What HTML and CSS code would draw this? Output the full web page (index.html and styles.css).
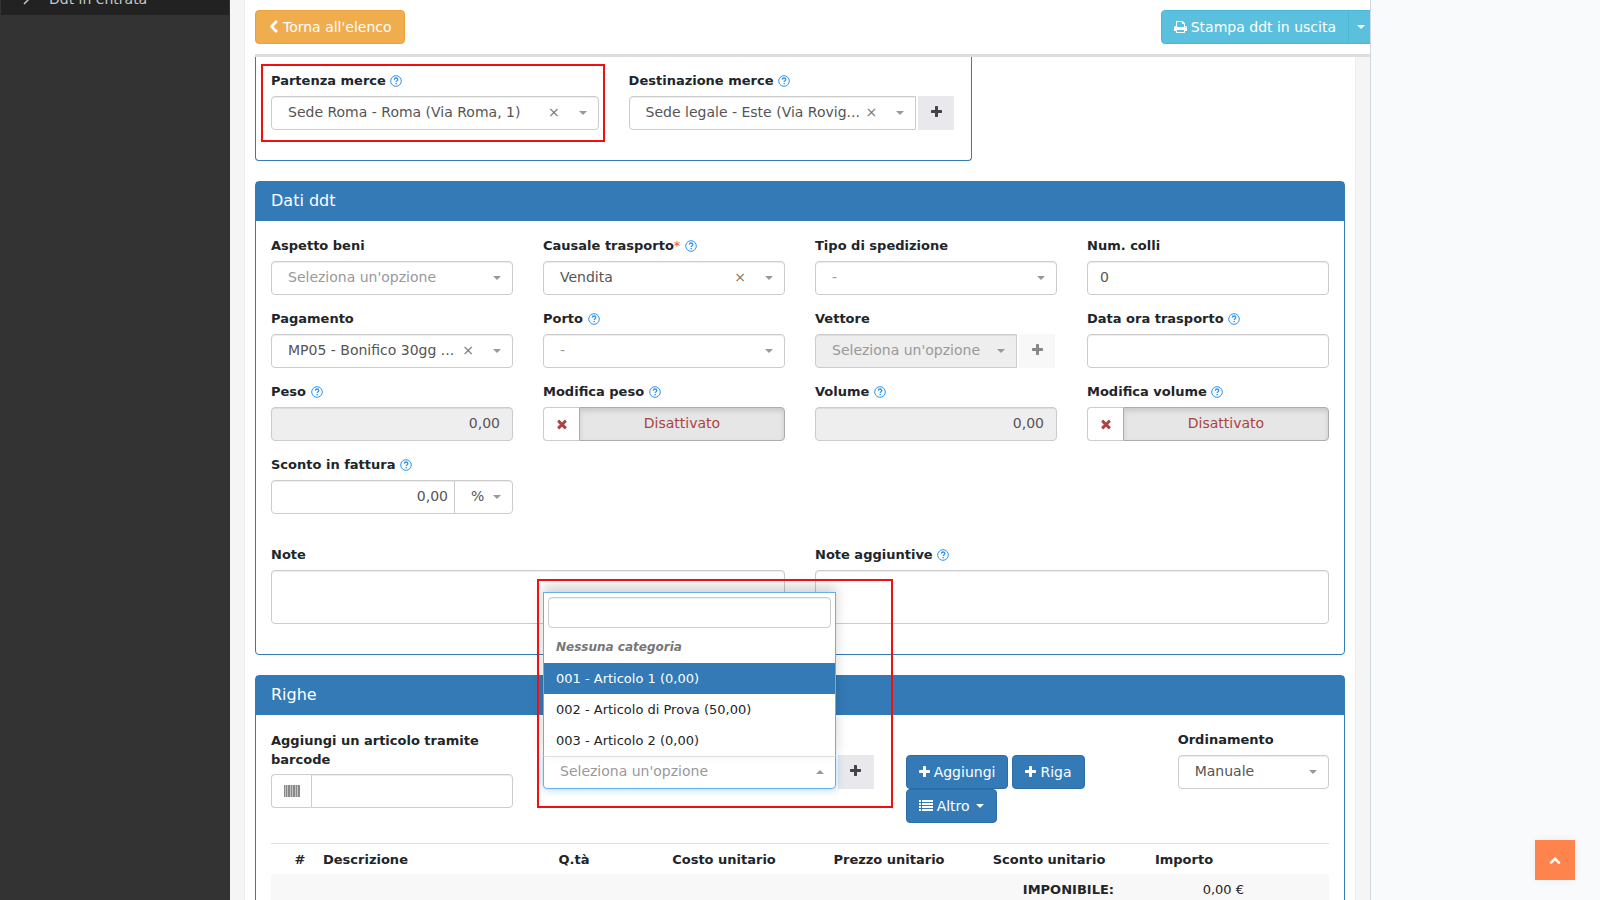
FILE: index.html
```html
<!DOCTYPE html>
<html lang="it">
<head>
<meta charset="utf-8">
<title>Ddt in uscita</title>
<link rel="stylesheet" href="styles.css">
</head>
<body>
<svg class="sprite" aria-hidden="true">
  <symbol id="plus" viewBox="192 0 1408 1792"><path d="M1600 736v192q0 40-28 68t-68 28h-416v416q0 40-28 68t-68 28h-192q-40 0-68-28t-28-68v-416h-416q-40 0-68-28t-28-68v-192q0-40 28-68t68-28h416v-416q0-40 28-68t68-28h192q40 0 68 28t28 68v416h416q40 0 68 28t28 68z"/></symbol>
  <symbol id="times" viewBox="0 0 1792 1792"><path d="M1490 1322q0 40-28 68l-136 136q-28 28-68 28t-68-28l-294-294-294 294q-28 28-68 28t-68-28l-136-136q-28-28-28-68t28-68l294-294-294-294q-28-28-28-68t28-68l136-136q28-28 68-28t68 28l294 294 294-294q28-28 68-28t68 28l136 136q28 28 28 68t-28 68l-294 294 294 294q28 28 28 68z"/></symbol>
  <symbol id="left" viewBox="256 0 1280 1792"><path d="M1427 301l-531 531 531 531q19 19 19 45t-19 45l-166 166q-19 19-45 19t-45-19l-742-742q-19-19-19-45t19-45l742-742q19-19 45-19t45 19l166 166q19 19 19 45t-19 45z"/></symbol>
  <symbol id="up" viewBox="0 0 1792 1792"><path d="M1683 1331l-166 165q-19 19-45 19t-45-19l-531-531-531 531q-19 19-45 19t-45-19l-166-165q-19-19-19-45.500t19-45.500l742-741q19-19 45-19t45 19l742 741q19 19 19 45.500t-19 45.500z"/></symbol>
  <symbol id="print" viewBox="64 0 1664 1792"><path d="M448 1536h896v-256h-896v256zm0-640h896v-384h-160q-40 0-68-28t-28-68v-160h-640v640zm1152 64q0-26-19-45t-45-19-45 19-19 45 19 45 45 19 45-19 19-45zm128 0v416q0 13-9.500 22.500t-22.500 9.500h-224v160q0 40-28 68t-68 28h-960q-40 0-68-28t-28-68v-160h-224q-13 0-22.500-9.500t-9.500-22.500v-416q0-79 56.500-135.500t135.500-56.500h64v-544q0-40 28-68t68-28h672q40 0 88 20t76 48l152 152q28 28 48 76t20 88v256h64q79 0 135.500 56.500t56.500 135.500z"/></symbol>
  <symbol id="list" viewBox="0 0 14 14"><path d="M0 1h2v2H0zM3 1h11v2H3zM0 4h2v2H0zM3 4h11v2H3zM0 7h2v2H0zM3 7h11v2H3zM0 10h2v2H0zM3 10h11v2H3z"/></symbol>
  <symbol id="barcode" viewBox="0 0 16 12"><path d="M0 0h1v12H0zM2 0h1v12H2zM4 0h2v12H4zM7 0h1v12H7zM9 0h2v12H9zM12 0h1v12h-1zM14 0h2v12h-2z"/><path opacity=".5" d="M0 0h16v12H0z"/></symbol>
  <symbol id="help" viewBox="0 0 12 12"><circle cx="6" cy="6" r="5.300" fill="none" stroke="currentColor"/><path d="M4.300 4.600C4.400 3.400 5.200 3 6 3c1 0 1.800.6 1.800 1.500C7.800 5.700 6.200 5.700 6.200 7" fill="none" stroke="currentColor" stroke-width="1.300"/><path d="M5.500 7.900h1.400v1.300H5.500z"/></symbol>
</svg>
<div class="app">
  <nav class="sidebar">
    <a class="nav-item" href="#"><svg class="angle" viewBox="0 0 6 10"><path d="M1 1l4 4-4 4" fill="none" stroke="currentColor" stroke-width="1.500"/></svg>Ddt in entrata</a>
  </nav>
  <main class="main">
    <header class="toolbar">
      <div class="toolbar-inner">
        <button class="btn warning"><svg class="icon narrow"><use href="#left"/></svg>Torna all'elenco</button>
        <div class="print-group">
          <button class="btn info first"><svg class="icon printer"><use href="#print"/></svg>Stampa ddt in uscita</button><button class="btn info last" aria-label="Altre stampe"><span class="caret light"></span></button>
        </div>
      </div>
    </header>
    <div class="content">
      <section class="panel scrolled">
        <div class="panel-body two">
          <div class="field">
            <label for="partenza">Partenza merce <svg class="help"><use href="#help"/></svg></label>
            <div class="select"><select id="partenza"><option>Sede Roma - Roma (Via Roma, 1)</option></select><button class="clear" aria-label="Rimuovi">×</button><span class="caret"></span></div>
            <div class="highlight highlight-field"></div>
          </div>
          <div class="field">
            <label for="dest">Destinazione merce <svg class="help"><use href="#help"/></svg></label>
            <div class="group">
              <div class="select joined"><select id="dest"><option>Sede legale - Este (Via Rovig...</option></select><button class="clear" aria-label="Rimuovi">×</button><span class="caret"></span></div>
              <button class="add" aria-label="Aggiungi sede"><svg class="icon narrow"><use href="#plus"/></svg></button>
            </div>
          </div>
        </div>
      </section>

      <section class="panel">
        <h2 class="panel-title">Dati ddt</h2>
        <div class="panel-body">
          <div class="four">
            <div class="field"><label for="aspetto">Aspetto beni</label>
              <div class="select empty"><select id="aspetto"><option>Seleziona un'opzione</option></select><span class="caret"></span></div></div>
            <div class="field"><label for="causale">Causale trasporto<span class="required">*</span> <svg class="help"><use href="#help"/></svg></label>
              <div class="select"><select id="causale"><option>Vendita</option></select><button class="clear" aria-label="Rimuovi">×</button><span class="caret"></span></div></div>
            <div class="field"><label for="spedizione">Tipo di spedizione</label>
              <div class="select empty"><select id="spedizione"><option>-</option></select><span class="caret"></span></div></div>
            <div class="field"><label for="colli">Num. colli</label>
              <input class="input" id="colli" value="0"></div>

            <div class="field"><label for="pagamento">Pagamento</label>
              <div class="select"><select id="pagamento"><option>MP05 - Bonifico 30gg ...</option></select><button class="clear" aria-label="Rimuovi">×</button><span class="caret"></span></div></div>
            <div class="field"><label for="porto">Porto <svg class="help"><use href="#help"/></svg></label>
              <div class="select empty"><select id="porto"><option>-</option></select><span class="caret"></span></div></div>
            <div class="field"><label for="vettore">Vettore</label>
              <div class="group">
                <div class="select empty joined"><select id="vettore" disabled><option>Seleziona un'opzione</option></select><span class="caret"></span></div>
                <button class="add" disabled aria-label="Aggiungi vettore"><svg class="icon narrow"><use href="#plus"/></svg></button>
              </div></div>
            <div class="field"><label for="data">Data ora trasporto <svg class="help"><use href="#help"/></svg></label>
              <input class="input" id="data"></div>

            <div class="field"><label for="peso">Peso <svg class="help"><use href="#help"/></svg></label>
              <input class="input number" id="peso" value="0,00" readonly></div>
            <div class="field"><label for="modpeso">Modifica peso <svg class="help"><use href="#help"/></svg></label>
              <div class="toggle"><span class="toggle-mark"><svg class="icon"><use href="#times"/></svg></span><button class="toggle-state" id="modpeso">Disattivato</button></div></div>
            <div class="field"><label for="volume">Volume <svg class="help"><use href="#help"/></svg></label>
              <input class="input number" id="volume" value="0,00" readonly></div>
            <div class="field"><label for="modvolume">Modifica volume <svg class="help"><use href="#help"/></svg></label>
              <div class="toggle"><span class="toggle-mark"><svg class="icon"><use href="#times"/></svg></span><button class="toggle-state" id="modvolume">Disattivato</button></div></div>

            <div class="field"><label for="sconto">Sconto in fattura <svg class="help"><use href="#help"/></svg></label>
              <div class="discount"><input class="input number" id="sconto" value="0,00">
                <div class="select unit"><select aria-label="Tipo sconto"><option>%</option></select><span class="caret"></span></div></div></div>
          </div>
          <div class="two notes">
            <div class="field"><label for="note">Note</label><textarea class="input" id="note"></textarea></div>
            <div class="field"><label for="note2">Note aggiuntive <svg class="help"><use href="#help"/></svg></label><textarea class="input" id="note2"></textarea></div>
          </div>
        </div>
      </section>

      <section class="panel">
        <h2 class="panel-title">Righe</h2>
        <div class="panel-body">
          <div class="row-tools">
            <div class="field span3"><label for="barcode-in">Aggiungi un articolo tramite barcode</label>
              <div class="barcode"><span class="addon"><svg class="barcode-icon"><use href="#barcode"/></svg></span><input class="input" id="barcode-in"></div></div>
            <div class="field span4 unlabelled">
              <div class="group">
                <div class="select empty joined open">
                  <select aria-label="Articolo"><option>Seleziona un'opzione</option></select><span class="caret above"></span>
                  <div class="dropdown">
                    <input class="input search" type="search" aria-label="Cerca">
                    <ul class="options">
                      <li class="category">Nessuna categoria</li>
                      <li class="option active">001 - Articolo 1 (0,00)</li>
                      <li class="option">002 - Articolo di Prova (50,00)</li>
                      <li class="option">003 - Articolo 2 (0,00)</li>
                    </ul>
                  </div>
                </div>
                <button class="add" aria-label="Nuovo articolo"><svg class="icon narrow"><use href="#plus"/></svg></button>
              </div>
              <div class="highlight highlight-article"></div>
            </div>
            <div class="span3 unlabelled actions">
              <button class="btn primary"><svg class="icon narrow"><use href="#plus"/></svg>Aggiungi</button>
              <button class="btn primary"><svg class="icon narrow"><use href="#plus"/></svg>Riga</button>
              <button class="btn primary"><svg class="icon"><use href="#list"/></svg>Altro<span class="caret light after-text"></span></button>
            </div>
            <div class="field span2"><label for="ordine">Ordinamento</label>
              <div class="select"><select id="ordine"><option>Manuale</option></select><span class="caret"></span></div></div>
          </div>
          <table class="rows">
            <colgroup><col class="c-check"><col class="c-num"><col><col class="c-mid"><col class="c-mid"><col class="c-price"><col class="c-disc"><col class="c-amount"><col class="c-tools"></colgroup>
            <thead><tr><th></th><th>#</th><th class="left">Descrizione</th><th>Q.tà</th><th>Costo unitario</th><th>Prezzo unitario</th><th>Sconto unitario</th><th>Importo</th><th></th></tr></thead>
            <tbody><tr><td class="total" colspan="7">IMPONIBILE:</td><td class="amount">0,00 €</td><td></td></tr></tbody>
          </table>
        </div>
      </section>
    </div>
  </main>
  <aside class="side"></aside>
</div>
<button class="to-top" aria-label="Torna su"><svg class="icon"><use href="#up"/></svg></button>
</body>
</html>
```
FILE: styles.css
```css
* { box-sizing: border-box; }
body {
  margin: 0;
  font: 13px/19px "DejaVu Sans", Verdana, sans-serif;
  color: #212529;
}
button, input, select, textarea { font: inherit; margin: 0; }
button { cursor: pointer; }
.sprite { position: absolute; width: 0; height: 0; }
.icon { width: 14px; height: 14px; fill: currentColor; flex: none; }
.icon.narrow { width: 11px; }
.icon.printer { width: 13px; }

.app { display: flex; height: 100vh; overflow: hidden; }
.sidebar { width: 230px; flex: none; background: #333; }
.nav-item {
  display: flex; align-items: flex-end; gap: 20px;
  height: 15px; padding: 0 0 6px 22px; margin-left: 1px; margin-right: 1px;
  font-size: 14px; line-height: 20px;
  background: #222; color: #c8c8c8; text-decoration: none;
}
.angle { width: 6px; height: 10px; margin-bottom: 4px; }
.main { flex: 1; min-width: 0; overflow: hidden; background: #f5f5f5; display: flex; flex-direction: column; }
.side { width: 230px; flex: none; background: #f9fafc; border-left: 1px solid #d2d6de; }

.toolbar { margin-left: 14px; padding-left: 10px; background: #fff; border-left: 1px solid #eee; }
.toolbar-inner { display: flex; justify-content: space-between; padding: 10px 0; border-bottom: 3px solid #ddd; }
.print-group { display: flex; margin-right: -5px; }
.btn {
  display: inline-flex; align-items: center; gap: 4px;
  height: 34px; padding: 0 12px;
  border: 1px solid; border-radius: 4px;
  font-size: 14px; line-height: 20px; color: #fff; white-space: nowrap;
}
.warning { background: #f0ad4e; border-color: #eea236; }
.info { background: #5bc0de; border-color: #46b8da; }
.info.first { border-radius: 4px 0 0 4px; }
.info.last { border-radius: 0 4px 4px 0; margin-left: -1px; padding: 0 9px 0 8px; }
.primary { background: #337ab7; border-color: #2e6da4; }

.content {
  flex: none; margin: 0 14px; padding: 0 10px;
  background: #fff; border: solid #eee; border-width: 0 1px;
}
.panel { margin-bottom: 20px; border: 1px solid #337ab7; border-radius: 4px; }
.panel-title {
  margin: 0; padding: 9px 15px 10px;
  font-size: 16px; line-height: 20px; font-weight: 400;
  background: #337ab7; color: #fff;
}
.panel-body { padding: 16px 15px 15px; }
.panel.scrolled { margin-right: 34.200%; border-top: 0; border-radius: 0 0 4px 4px; }
.panel.scrolled .panel-body { padding-top: 15px; padding-bottom: 30px; }
.two { display: grid; grid-template-columns: 1fr 1fr; column-gap: 30px; }
.four { display: grid; grid-template-columns: repeat(4, 1fr); gap: 15px 30px; }
.notes { padding: 32px 0 15px; }
.field { position: relative; min-width: 0; }
.field > label { display: block; margin-bottom: 6px; font-weight: 700; line-height: 18px; }
.field > label[for="barcode-in"] { line-height: 19px; margin-bottom: 5px; }
.help { width: 12px; height: 12px; vertical-align: -2px; fill: currentColor; color: #2b95f3; }
.required { color: #e74c3c; font-weight: 400; }

.input, .select select {
  display: block; width: 100%; height: 34px; padding: 5px 12px 7px;
  border: 1px solid #ccc; border-radius: 4px; outline: 0;
  background: #fff; color: #555; font-size: 14px;
  box-shadow: inset 0 1px 1px rgba(0, 0, 0, .075);
}
.input[readonly] { background: #eee; }
.number { text-align: right; }
textarea.input { height: 54px; resize: none; }
.select { position: relative; flex: 1; min-width: 0; }
.select select { appearance: none; padding: 0 16px 2px; opacity: 1; }
.select.empty select { color: #999; }
.select select:disabled { background: #eee; }
.joined select { border-radius: 4px 0 0 4px; }
.caret {
  width: 0; height: 0;
  border: solid transparent; border-width: 4px 4px 0; border-top-color: #999;
}
.select .caret { position: absolute; right: 12px; top: 15px; pointer-events: none; }
.caret.above { border-width: 0 4px 4px; border-bottom-color: #999; }
.caret.light { border-top-color: #fff; }
.caret.after-text { margin-left: 2px; }
.clear {
  position: absolute; right: 39px; top: 6px; padding: 0;
  border: 0; background: none; color: #777; font-size: 14px; line-height: 20px;
}
.group { display: flex; gap: 2px; padding-right: 2px; }
.add { width: 36px; height: 34px; padding: 0; border: 0; background: #e9e8ec; color: #444; }
.add:disabled { background: #f8f8f8; color: #888; }
.add .icon { display: block; margin: -2px auto 0; }

.toggle { display: flex; height: 34px; color: #a94442; font-size: 14px; }
.toggle-mark {
  width: 36px; display: flex; align-items: center; justify-content: center;
  border: 1px solid #ccc; border-right: 0; border-radius: 4px 0 0 4px;
}
.toggle-state {
  flex: 1; padding: 0 0 2px; color: inherit; background: #e6e6e6;
  border: 1px solid #adadad; border-radius: 0 4px 4px 0;
  box-shadow: inset 0 3px 5px rgba(0, 0, 0, .125);
}
.discount, .barcode { display: flex; }
.discount .input { flex: 1; min-width: 0; padding-right: 6px; border-radius: 4px 0 0 4px; }
.discount .unit { flex: none; width: 59px; margin-left: -1px; }
.unit select { border-radius: 0 4px 4px 0; }
.addon {
  width: 40px; flex: none; display: flex; align-items: center; justify-content: center;
  border: 1px solid #ccc; border-right: 0; border-radius: 4px 0 0 4px;
}
.barcode-icon { width: 16px; height: 12px; fill: #888; }
.barcode .input { border-radius: 0 4px 4px 0; }

.row-tools { display: grid; grid-template-columns: repeat(12, 1fr); column-gap: 30px; }
.span2 { grid-column: span 2; }
.span3 { grid-column: span 3; }
.span4 { grid-column: span 4; }
.unlabelled { padding-top: 24px; }
.actions { display: flex; flex-wrap: wrap; align-content: flex-start; column-gap: 4px; }
.open select { border-color: #66afe9; box-shadow: 0 0 8px rgba(102, 175, 233, .6); border-radius: 0 0 4px 4px; }
.dropdown {
  position: absolute; left: 0; right: 0; bottom: 32px; padding: 4px 0 0;
  background: #fff; border: 1px solid #66afe9; border-bottom-color: #ddd;
  box-shadow: 0 -6px 12px rgba(0, 0, 0, .175);
}
.dropdown .search { width: auto; min-width: calc(100% - 8px); height: 31px; margin: 0 4px 4px; }
.options { list-style: none; margin: 0; padding: 0; }
.options li { padding: 6px 12px; }
.options .category { font-size: 12px; font-weight: 700; font-style: italic; color: #777; }
.option.active { background: #337ab7; color: #fff; }
.highlight { position: absolute; border: 2px solid #f01010; pointer-events: none; }
.highlight-field { inset: -8px -6px -12px -10px; }
.highlight-article { inset: -152px -17px 15px -6px; }

.rows { width: 100%; margin-top: 20px; table-layout: fixed; border-collapse: collapse; }
.rows th, .rows td { padding: 6px 5px 5px; }
.rows th { border-top: 1px solid #ddd; }
.rows td { background: #f8f8f8; }
.rows .left { text-align: left; }
.rows .total { text-align: right; font-weight: 700; }
.rows .amount { text-align: right; }
.c-check { width: 11px; }
.c-num { width: 36px; }
.c-mid { width: 150px; }
.c-price { width: 180px; }
.c-disc { width: 140px; }
.c-amount { width: 130px; }
.c-tools { width: 80px; }

.to-top {
  position: fixed; right: 25px; bottom: 20px; width: 40px; height: 40px; padding: 0;
  border: 0; background: #ff834c; color: #fff; box-shadow: 0 0 8px rgba(0, 0, 0, .06);
}
.to-top .icon { display: block; margin: 0 auto; width: 12px; }
```
